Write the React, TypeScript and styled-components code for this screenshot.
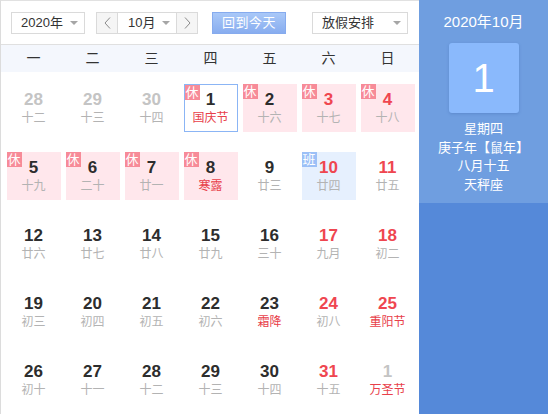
import React from "react";
import styled, { createGlobalStyle, css } from "styled-components";

const Global = createGlobalStyle`
  html, body { margin: 0; padding: 0; background: #fff; }
  body { font-family: "Liberation Sans", "Noto Sans CJK SC", sans-serif; }
  * { box-sizing: border-box; }
`;

const FONT = `"Liberation Sans", "Noto Sans CJK SC", sans-serif`;

type Kind = "plain" | "rest" | "work" | "today";
type Day = {
  n: number;
  lunar: string;
  other?: boolean;
  red?: boolean;
  fest?: boolean;
  kind?: Kind;
};

const weeks = ["一", "二", "三", "四", "五", "六", "日"];

const days: Day[] = [
  { n: 28, lunar: "十二", other: true },
  { n: 29, lunar: "十三", other: true },
  { n: 30, lunar: "十四", other: true },
  { n: 1, lunar: "国庆节", fest: true, kind: "today" },
  { n: 2, lunar: "十六", kind: "rest" },
  { n: 3, lunar: "十七", red: true, kind: "rest" },
  { n: 4, lunar: "十八", red: true, kind: "rest" },
  { n: 5, lunar: "十九", kind: "rest" },
  { n: 6, lunar: "二十", kind: "rest" },
  { n: 7, lunar: "廿一", kind: "rest" },
  { n: 8, lunar: "寒露", fest: true, kind: "rest" },
  { n: 9, lunar: "廿三" },
  { n: 10, lunar: "廿四", red: true, kind: "work" },
  { n: 11, lunar: "廿五", red: true },
  { n: 12, lunar: "廿六" },
  { n: 13, lunar: "廿七" },
  { n: 14, lunar: "廿八" },
  { n: 15, lunar: "廿九" },
  { n: 16, lunar: "三十" },
  { n: 17, lunar: "九月", red: true },
  { n: 18, lunar: "初二", red: true },
  { n: 19, lunar: "初三" },
  { n: 20, lunar: "初四" },
  { n: 21, lunar: "初五" },
  { n: 22, lunar: "初六" },
  { n: 23, lunar: "霜降", fest: true },
  { n: 24, lunar: "初八", red: true },
  { n: 25, lunar: "重阳节", red: true, fest: true },
  { n: 26, lunar: "初十" },
  { n: 27, lunar: "十一" },
  { n: 28, lunar: "十二" },
  { n: 29, lunar: "十三" },
  { n: 30, lunar: "十四" },
  { n: 31, lunar: "十五", red: true },
  { n: 1, lunar: "万圣节", other: true, fest: true },
];

const Shell = styled.div`
  display: flex;
  width: 548px;
  height: 414px;
  overflow: hidden;
`;

const Main = styled.div`
  width: 419px;
  height: 414px;
  border-top: 1px solid #e1e1e1;
  border-left: 1px solid #dcdcdc;
  display: flex;
  flex-direction: column;
`;

const Toolbar = styled.div`
  height: 44px;
  padding: 11px 0 0 10px;
  border-bottom: 1px solid #e0e0e0;
  display: flex;
  align-items: flex-start;
`;

const Select = styled.div<{ $w: number; $ml?: number }>`
  width: ${(p) => p.$w}px;
  height: 22px;
  margin-left: ${(p) => p.$ml ?? 0}px;
  border: 1px solid #dadada;
  background: #fff;
  display: flex;
  align-items: center;
  padding: 0 6px 0 9px;
  font: 13px ${FONT};
  color: #333;
`;

const Label = styled.span`
  flex: 1;
  line-height: 20px;
`;

const Caret = styled.span`
  width: 0;
  height: 0;
  border-left: 4px solid transparent;
  border-right: 4px solid transparent;
  border-top: 4px solid #a6a6a6;
`;

const MonthGroup = styled.div`
  margin-left: 11px;
  height: 22px;
  border: 1px solid #dadada;
  display: flex;
`;

const Step = styled.div<{ $side: "l" | "r" }>`
  width: 21px;
  height: 20px;
  background: #f5f5f5;
  display: flex;
  align-items: center;
  justify-content: center;
  ${(p) =>
    p.$side === "l"
      ? css`border-right: 1px solid #dadada;`
      : css`border-left: 1px solid #dadada;`}
`;

const MonthBox = styled.div`
  width: 58px;
  height: 20px;
  display: flex;
  align-items: center;
  padding: 0 6px 0 10px;
  font: 13px ${FONT};
  color: #333;
`;

const TodayButton = styled.div`
  margin-left: 14px;
  width: 74px;
  height: 22px;
  border: 1px solid #86abee;
  background: linear-gradient(#a9c8f8, #88adef);
  color: #fff;
  font: 13px ${FONT};
  line-height: 20px;
  text-align: center;
  letter-spacing: 0.5px;
`;

const WeekHeader = styled.div`
  height: 27px;
  background: #f4f7fd;
  padding-left: 3px;
  display: grid;
  grid-template-columns: repeat(7, 59px);
`;

const WeekDay = styled.div`
  text-align: center;
  line-height: 27px;
  font: 14px ${FONT};
  line-height: 27px;
  color: #333;
`;

const Grid = styled.div`
  padding: 2px 0 0 3px;
  display: grid;
  grid-template-columns: repeat(7, 59px);
  grid-auto-rows: 68px;
`;

const Slot = styled.div`
  display: flex;
  align-items: center;
  justify-content: center;
`;

const Cell = styled.div<{ $kind: Kind }>`
  position: relative;
  width: 54px;
  height: 48px;
  padding-top: 7px;
  text-align: center;
  ${(p) =>
    p.$kind === "rest" &&
    css`
      background: #ffe7ec;
    `}
  ${(p) =>
    p.$kind === "work" &&
    css`
      background: #e6f0fe;
    `}
  ${(p) =>
    p.$kind === "today" &&
    css`
      background: #fff;
      border: 1px solid #8bb5f5;
      padding-top: 6px;
    `}
`;

const Num = styled.div<{ $tone: "dark" | "red" | "gray" }>`
  font: bold 17px ${FONT};
  line-height: 18px;
  color: ${(p) =>
    p.$tone === "red" ? "#ef4650" : p.$tone === "gray" ? "#c4c4c4" : "#2d2d2d"};
`;

const Lunar = styled.div<{ $fest?: boolean }>`
  font: 12px ${FONT};
  line-height: 18px;
  color: ${(p) => (p.$fest ? "#e8404a" : "#b3b3b3")};
  white-space: nowrap;
`;

const Badge = styled.span<{ $work?: boolean }>`
  position: absolute;
  top: 0;
  left: 0;
  width: 15px;
  height: 15px;
  background: ${(p) => (p.$work ? "#9cc0f7" : "#f78b98")};
  color: #fff;
  font: 13px ${FONT};
  line-height: 15px;
  text-align: center;
`;

const Side = styled.div`
  width: 129px;
  height: 414px;
  background: #5589d9;
  display: flex;
  flex-direction: column;
`;

const SideTop = styled.div`
  height: 203px;
  background: #6f9ee0;
  padding-top: 12px;
  color: #fff;
  text-align: center;
`;

const SideTitle = styled.div`
  font: 15px ${FONT};
  line-height: 20px;
`;

const DayBox = styled.div`
  width: 70px;
  height: 70px;
  margin: 11px auto 0;
  border-radius: 3px;
  background: #8ab9fc;
  box-shadow: 0 1px 3px rgba(40, 80, 150, 0.25);
  font: 40px ${FONT};
  line-height: 70px;
`;

const Info = styled.div`
  margin-top: 7px;
  font: 13px ${FONT};
  line-height: 18.7px;
`;

const Chevron = ({ dir }: { dir: "l" | "r" }) => (
  <svg width="7" height="12" viewBox="0 0 7 12">
    <polyline
      points={dir === "l" ? "6,0.5 1,6 6,11.5" : "1,0.5 6,6 1,11.5"}
      fill="none"
      stroke="#8a8a8a"
      strokeWidth="1"
    />
  </svg>
);

export default function App() {
  return (
    <>
      <Global />
      <Shell>
        <Main>
          <Toolbar>
            <Select $w={74}>
              <Label>2020年</Label>
              <Caret />
            </Select>
            <MonthGroup>
              <Step $side="l">
                <Chevron dir="l" />
              </Step>
              <MonthBox>
                <Label>10月</Label>
                <Caret />
              </MonthBox>
              <Step $side="r">
                <Chevron dir="r" />
              </Step>
            </MonthGroup>
            <TodayButton>回到今天</TodayButton>
            <Select $w={96} $ml={26}>
              <Label>放假安排</Label>
              <Caret />
            </Select>
          </Toolbar>
          <WeekHeader>
            {weeks.map((w) => (
              <WeekDay key={w}>{w}</WeekDay>
            ))}
          </WeekHeader>
          <Grid>
            {days.map((d, i) => {
              const kind: Kind = d.kind ?? "plain";
              const tone = d.other ? "gray" : d.red ? "red" : "dark";
              return (
                <Slot key={i}>
                  <Cell $kind={kind}>
                    {(kind === "rest" || kind === "today") && <Badge>休</Badge>}
                    {kind === "work" && <Badge $work>班</Badge>}
                    <Num $tone={tone}>{d.n}</Num>
                    <Lunar $fest={d.fest}>{d.lunar}</Lunar>
                  </Cell>
                </Slot>
              );
            })}
          </Grid>
        </Main>
        <Side>
          <SideTop>
            <SideTitle>2020年10月</SideTitle>
            <DayBox>1</DayBox>
            <Info>
              <div>星期四</div>
              <div>庚子年【鼠年】</div>
              <div>八月十五</div>
              <div>天秤座</div>
            </Info>
          </SideTop>
        </Side>
      </Shell>
    </>
  );
}
